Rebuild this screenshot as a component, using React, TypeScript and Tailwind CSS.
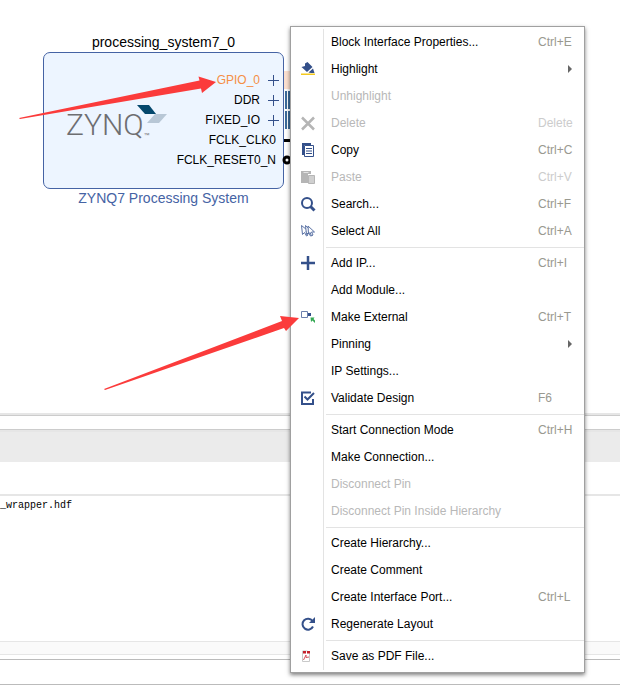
import type { ReactNode } from "react";

type Item = {
  label: string;
  shortcut?: string;
  disabled?: boolean;
  submenu?: boolean;
  icon?: ReactNode;
};

const NAVY = "#34508a";

function Icon({ children }: { children: ReactNode }) {
  return (
    <svg width="16" height="16" viewBox="0 0 16 16" fill="none" aria-hidden="true">
      {children}
    </svg>
  );
}

const highlightIcon = (
  <Icon>
    <path d="M5 2.500 7.500 1 12.500 6 7 11 1.500 6 5 5Z" fill={NAVY} />
    <path d="M13 7.500 14.500 12H11L8.500 11.500Z" fill={NAVY} />
    <path d="M1 12.500h14v1.500H1z" fill="#f3c91f" />
  </Icon>
);

const deleteIcon = (
  <Icon>
    <path d="M2 2.500 14 14.500M14 2.500 2 14.500" stroke="#b5b5b5" strokeWidth="2.500" />
  </Icon>
);

const copyIcon = (
  <Icon>
    <path d="M2 1h9v2H4v10H2z" fill={NAVY} />
    <path d="M4.500 3.500h9v11h-9z" fill="#fff" stroke={NAVY} />
    <path d="M6 6.500h6M6 9h6M6 11.500h6" stroke={NAVY} />
  </Icon>
);

const pasteIcon = (
  <Icon>
    <path d="M1 2h10v3H8v9H1z" fill="#b5b5b5" />
    <path d="M3.500 3.500h5" stroke="#e3e3e3" />
    <path d="M8.500 6.500h6v8h-6z" fill="#cfcfcf" stroke="#b5b5b5" />
  </Icon>
);

const searchIcon = (
  <Icon>
    <circle cx="7" cy="7" r="5" stroke={NAVY} strokeWidth="2" />
    <path d="m10.500 10.500 4 4" stroke={NAVY} strokeWidth="3" />
  </Icon>
);

const selectAllIcon = (
  <Icon>
    <path d="m1.500 2.500 1 9 2-2 2 3.500 1.500-1-2-3.500H9Z" fill="#fff" stroke="#5a72a5" />
    <path d="m5.500 2.500 1 9 2-2 2 3.500 1.500-1-2-3.500h2Z" fill="#fff" stroke="#5a72a5" />
    <path d="m8 3 .5 8 1.500-1.500L11.500 13l1.500-1-1.500-3h3Z" fill="#fff" stroke="#5a72a5" />
  </Icon>
);

const addIcon = (
  <Icon>
    <path d="M8 1v14M1 8h14" stroke={NAVY} strokeWidth="2.500" />
  </Icon>
);

const externalIcon = (
  <Icon>
    <path d="M1.500 2.500h6v6h-6z" stroke="#6c7fac" />
    <path d="M8 4h3v3H8z" fill={NAVY} />
    <path d="M10.500 8.500h4L13.500 10l1.500 1.500V14l-2.500-2.500-1.500 1.500z" fill="#34a853" />
  </Icon>
);

const validateIcon = (
  <Icon>
    <path d="M11 2.500H2v11.500h11V9" stroke={NAVY} strokeWidth="2" />
    <path d="m4.500 6.500 3 3L14 3" stroke={NAVY} strokeWidth="2" />
  </Icon>
);

const regenerateIcon = (
  <Icon>
    <path d="M12.500 5A5.500 5.500 0 1 0 13 10.500" stroke={NAVY} strokeWidth="2" />
    <path d="M15 1v6H9Z" fill={NAVY} />
  </Icon>
);

const pdfIcon = (
  <Icon>
    <path d="M2.500 3v10.500h7V5.500L7.500 3Z" fill="#fff" stroke="#c9c9c9" />
    <path d="M3 3h3v2.500H3zM7 3h3v2.500H7z" fill="#c4202b" />
    <path d="m3.500 12 2.500-5v2.500L9 9" stroke="#d4505a" />
  </Icon>
);

const groups: Item[][] = [
  [
    { label: "Block Interface Properties...", shortcut: "Ctrl+E" },
    { label: "Highlight", submenu: true, icon: highlightIcon },
    { label: "Unhighlight", disabled: true },
    { label: "Delete", shortcut: "Delete", disabled: true, icon: deleteIcon },
    { label: "Copy", shortcut: "Ctrl+C", icon: copyIcon },
    { label: "Paste", shortcut: "Ctrl+V", disabled: true, icon: pasteIcon },
    { label: "Search...", shortcut: "Ctrl+F", icon: searchIcon },
    { label: "Select All", shortcut: "Ctrl+A", icon: selectAllIcon },
  ],
  [
    { label: "Add IP...", shortcut: "Ctrl+I", icon: addIcon },
    { label: "Add Module..." },
    { label: "Make External", shortcut: "Ctrl+T", icon: externalIcon },
    { label: "Pinning", submenu: true },
    { label: "IP Settings..." },
    { label: "Validate Design", shortcut: "F6", icon: validateIcon },
  ],
  [
    { label: "Start Connection Mode", shortcut: "Ctrl+H" },
    { label: "Make Connection..." },
    { label: "Disconnect Pin", disabled: true },
    { label: "Disconnect Pin Inside Hierarchy", disabled: true },
  ],
  [
    { label: "Create Hierarchy..." },
    { label: "Create Comment" },
    { label: "Create Interface Port...", shortcut: "Ctrl+L" },
    { label: "Regenerate Layout", icon: regenerateIcon },
  ],
  [{ label: "Save as PDF File...", icon: pdfIcon }],
];

function MenuItem({ item }: { item: Item }) {
  return (
    <button
      type="button"
      role="menuitem"
      disabled={item.disabled}
      className="flex h-[27px] w-full items-center text-left text-black disabled:text-[#b8b8b8]"
    >
      <span className="flex w-[40px] shrink-0 items-center pl-[9px]">{item.icon}</span>
      <span className="flex-1 whitespace-nowrap">{item.label}</span>
      {item.shortcut && (
        <span className={item.disabled ? "w-[46px] text-[#cccccc]" : "w-[46px] text-[#999990]"}>
          {item.shortcut}
        </span>
      )}
      {item.submenu && (
        <svg className="mr-[12px]" width="4" height="8" viewBox="0 0 4 8" aria-hidden="true">
          <path d="M0 0 4 4 0 8Z" fill="#666" />
        </svg>
      )}
    </button>
  );
}

function ContextMenu() {
  return (
    <div
      role="menu"
      className="absolute top-[26px] left-[290px] w-[295px] border border-[#a0a0a0] bg-white pt-px pb-[3px] text-[12px] shadow-[0_2px_4px_rgba(0,0,0,0.5)]"
    >
      <div className="absolute top-[2px] bottom-[2px] left-[32px] w-px bg-[#e3e3e3]" />
      {groups.map((group, i) => (
        <div key={i}>
          {i > 0 && <div role="separator" className="mt-[3px] mb-px ml-[35px] h-px bg-[#e3e3e3]" />}
          {group.map((item) => (
            <MenuItem key={item.label} item={item} />
          ))}
        </div>
      ))}
    </div>
  );
}

const ports = [
  { name: "GPIO_0", bus: true, selected: true },
  { name: "DDR", bus: true },
  { name: "FIXED_IO", bus: true },
  { name: "FCLK_CLK0" },
  { name: "FCLK_RESET0_N" },
];

function ZynqLogo() {
  return (
    <div className="absolute top-[52px] left-[22px] flex items-end text-[#6d6e71]">
      <span className="font-['Roboto'] text-[30px] leading-[40px] font-light">ZYNQ</span>
      <span className="text-[6px] leading-[20px]">™</span>
      <svg className="absolute top-0 left-[70px]" width="32" height="20" viewBox="0 0 32 20" aria-hidden="true">
        <path d="M1 0h12l7 9H9Z" fill="#04486d" />
        <path d="M19 9h12l-8 9H11Z" fill="#b8c7d6" />
      </svg>
    </div>
  );
}

function Diagram() {
  return (
    <section className="relative h-[413px]">
      <div className="absolute top-[32px] left-[43px] w-[241px] text-center text-[14px]">
        <div className="leading-[20px]">processing_system7_0</div>
        <div className="relative h-[137px] rounded-[7px] border border-[#4563a4] bg-[#edf5ff] pt-[17px] text-right text-[12px]">
          <ZynqLogo />
          {ports.map((p) => (
            <div key={p.name} className="flex h-[20px] items-center justify-end gap-[7px] pr-[3px]">
              <span className={p.selected ? "text-[#f58f45]" : p.bus ? "" : "pr-[4px]"}>{p.name}</span>
              {p.bus && (
                <svg width="13" height="13" viewBox="0 0 13 13" aria-label="Expand">
                  <path d="M6.500 1v11M1 6.500h11" stroke="#34508a" />
                </svg>
              )}
            </div>
          ))}
        </div>
        <div className="leading-[18px] text-[#4563a4]">ZYNQ7 Processing System</div>
      </div>
      <svg className="absolute top-[70px] left-[280px]" width="14" height="98" viewBox="0 0 14 98" aria-hidden="true">
        <path d="M4 1h10v18H4z" fill="#fbe0d0" />
        <path d="M5 21h2v18H5zM8 21h2v18H8zM5 41h2v18H5zM8 41h2v18H8z" fill="#3b6a99" />
        <path d="M4 70.500h10" stroke="#000" strokeWidth="3" />
        <circle cx="7" cy="90" r="3" fill="#fff" stroke="#000" strokeWidth="3" />
      </svg>
    </section>
  );
}

function Pointers() {
  return (
    <svg className="pointer-events-none absolute top-0 left-0" width="320" height="400" viewBox="0 0 320 400" aria-hidden="true">
      <path d="M19 118 199.500 80.500 198.500 76.500 216 82 202 93 201 88.500 20 119Z" fill="#fb3b3b" />
      <path d="M104 389 282 321 280 316 299 318 286 331 284 328 105 390Z" fill="#fb3b3b" />
    </svg>
  );
}

export default function App() {
  return (
    <main className="relative min-h-screen overflow-hidden bg-white font-['Liberation_Sans',Arial,sans-serif] text-black">
      <Diagram />
      <div className="h-[3px] border-b border-[#cccccc] bg-[#e6e6e6]" />
      <section className="mt-[13px] border-t border-[#cccccc]">
        <div className="h-[32px] border-t-2 border-[#e6e6e6] bg-[#ebebeb]" />
        <div className="h-[34px] border-b-2 border-[#e6e6e6]" />
        <pre className="h-[145px] pt-[2px] font-['Liberation_Mono',monospace] text-[10px] leading-[16px]">_wrapper.hdf</pre>
        <div className="h-[14px] border-y border-[#e6e6e6] bg-[#fafafa]" />
      </section>
      <footer className="mt-[4px] h-[26px] border-y border-[#bbbbbb]" />
      <ContextMenu />
      <Pointers />
    </main>
  );
}
